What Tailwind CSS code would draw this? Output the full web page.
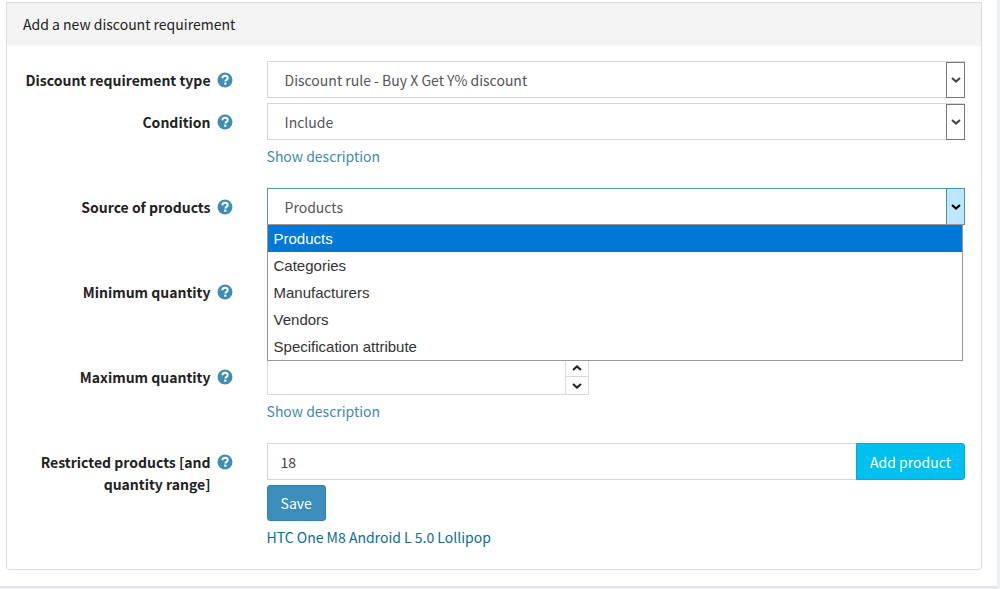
<!DOCTYPE html>
<html lang="en">
<head>
  <meta charset="UTF-8" />
  <meta name="viewport" content="width=device-width, initial-scale=1.0"/>
  <title>Add a new discount requirement</title>
  <script src="https://cdn.jsdelivr.net/npm/@tailwindcss/browser@4"></script>
</head>
<body class="bg-[#eff2f4] font-['Noto_Sans_CJK_SC',sans-serif] text-[14px] leading-[22px] text-[#222]">

  <!-- icons, reused below -->
  <svg class="hidden">
    <symbol id="help" viewBox="0 0 16 16">
      <circle cx="8" cy="8" r="7.5" fill="#3f8db5"/>
      <path d="M5.4 6.2C5.4 4.5 6.5 3.7 8 3.7c1.6 0 2.7.9 2.7 2.3 0 1.8-2.3 1.9-2.3 3.4" fill="none" stroke="#fff" stroke-width="2"/>
      <rect x="7.2" y="10.6" width="2.2" height="2.1" fill="#fff"/>
    </symbol>
    <symbol id="down" viewBox="0 0 10 6">
      <path d="M1 1l4 3.6L9 1" fill="none" stroke="currentColor" stroke-width="2"/>
    </symbol>
    <symbol id="up" viewBox="0 0 10 6">
      <path d="M1 5l4-3.6L9 5" fill="none" stroke="currentColor" stroke-width="2"/>
    </symbol>
  </svg>

  <div class="mr-[3px] border-b-2 border-[#e4e5e7] bg-white pt-[2px] pr-[15px] pb-4 pl-[6px]">
    <div class="overflow-hidden rounded-b border border-[#dddddd]">
      <h1 class="bg-[#f4f4f4] px-4 pt-[10px] pb-[11px]">Add a new discount requirement</h1>

      <form class="pt-[15px] pr-4 pb-[21px] pl-4">

        <div class="mb-[5px] grid grid-cols-[3fr_10fr] gap-x-[34px]">
          <div class="flex justify-end gap-[6px] pt-2">
            <label for="type" class="text-right font-bold">Discount requirement type</label>
            <svg class="mt-[3px] size-4 shrink-0"><use href="#help"/></svg>
          </div>
          <div class="relative">
            <select id="type" class="h-[37px] w-full appearance-none border border-[#d6d6d6] bg-white px-[17px] text-[#555]">
              <option>Discount rule - Buy X Get Y% discount</option>
            </select>
            <span class="pointer-events-none absolute top-px right-0 bottom-0 flex w-[19px] items-center justify-center border border-[#777] bg-white text-[#444]">
              <svg class="h-[6px] w-[10px]"><use href="#down"/></svg>
            </span>
          </div>
        </div>

        <div class="mb-[21px] grid grid-cols-[3fr_10fr] gap-x-[34px]">
          <div class="flex justify-end gap-[6px] pt-2">
            <label for="condition" class="text-right font-bold">Condition</label>
            <svg class="mt-[3px] size-4 shrink-0"><use href="#help"/></svg>
          </div>
          <div>
            <div class="relative">
              <select id="condition" class="h-[37px] w-full appearance-none border border-[#d6d6d6] bg-white px-[17px] text-[#555]">
                <option>Include</option>
              </select>
              <span class="pointer-events-none absolute top-px right-0 bottom-0 flex w-[19px] items-center justify-center border border-[#777] bg-white text-[#444]">
                <svg class="h-[6px] w-[10px]"><use href="#down"/></svg>
              </span>
            </div>
            <a href="#" class="mt-[5px] block text-[#438ba5]">Show description</a>
          </div>
        </div>

        <div class="mb-[48px] grid grid-cols-[3fr_10fr] gap-x-[34px]">
          <div class="flex justify-end gap-[6px] pt-2">
            <label for="source" class="text-right font-bold">Source of products</label>
            <svg class="mt-[3px] size-4 shrink-0"><use href="#help"/></svg>
          </div>
          <div class="relative">
            <select id="source" class="h-[37px] w-full appearance-none border border-[#5c97a8] bg-white px-[17px] text-[#555]">
              <option>Products</option>
            </select>
            <span class="pointer-events-none absolute top-0 right-0 bottom-0 flex w-[19px] items-center justify-center border border-[#4295a8] bg-[#bee6fd] text-black">
              <svg class="h-[6px] w-[10px]"><use href="#down"/></svg>
            </span>
            <!-- open list -->
            <ul class="absolute top-9 right-[2px] left-0 z-10 border border-[#999] bg-white font-['Liberation_Sans',Arial,sans-serif] text-[15px] leading-[27px] text-[#333]">
              <li class="bg-[#0078d7] px-[6px] text-white">Products</li>
              <li class="px-[6px]">Categories</li>
              <li class="px-[6px]">Manufacturers</li>
              <li class="px-[6px]">Vendors</li>
              <li class="px-[6px]">Specification attribute</li>
            </ul>
          </div>
        </div>

        <div class="mb-[48px] grid grid-cols-[3fr_10fr] gap-x-[34px]">
          <div class="flex justify-end gap-[6px] pt-2">
            <label for="min" class="text-right font-bold">Minimum quantity</label>
            <svg class="mt-[3px] size-4 shrink-0"><use href="#help"/></svg>
          </div>
          <div class="flex h-[37px] w-[322px] border border-[#d9d9d9]">
            <input type="text" id="min" class="min-w-0 flex-1 px-3" />
            <div class="flex w-[23px] flex-col border-l border-[#d9d9d9]">
              <button type="button" aria-label="Increase minimum" class="flex flex-1 items-center justify-center border-b border-[#d9d9d9]"><svg class="h-[6px] w-[10px]"><use href="#up"/></svg></button>
              <button type="button" aria-label="Decrease minimum" class="flex flex-1 items-center justify-center"><svg class="h-[6px] w-[10px]"><use href="#down"/></svg></button>
            </div>
          </div>
        </div>

        <div class="mb-[21px] grid grid-cols-[3fr_10fr] gap-x-[34px]">
          <div class="flex justify-end gap-[6px] pt-2">
            <label for="max" class="text-right font-bold">Maximum quantity</label>
            <svg class="mt-[3px] size-4 shrink-0"><use href="#help"/></svg>
          </div>
          <div>
            <div class="flex h-[37px] w-[322px] border border-[#d9d9d9]">
              <input type="text" id="max" class="min-w-0 flex-1 px-3" />
              <div class="flex w-[23px] flex-col border-l border-[#d9d9d9]">
                <button type="button" aria-label="Increase maximum" class="flex flex-1 items-center justify-center border-b border-[#d9d9d9]"><svg class="h-[6px] w-[10px]"><use href="#up"/></svg></button>
                <button type="button" aria-label="Decrease maximum" class="flex flex-1 items-center justify-center"><svg class="h-[6px] w-[10px]"><use href="#down"/></svg></button>
              </div>
            </div>
            <a href="#" class="mt-[5px] block text-[#438ba5]">Show description</a>
          </div>
        </div>

        <div class="grid grid-cols-[3fr_10fr] gap-x-[34px]">
          <div class="flex justify-end gap-[6px] pt-2">
            <label for="restricted" class="text-right font-bold">Restricted products [and quantity range]</label>
            <svg class="mt-[3px] size-4 shrink-0"><use href="#help"/></svg>
          </div>
          <div>
            <div class="flex h-[37px]">
              <input type="text" id="restricted" value="18" class="min-w-0 flex-1 border border-r-0 border-[#d6d6d6] px-[13px] text-[#444]" />
              <button type="button" class="rounded-r-[3px] border border-[#00acd6] bg-[#00c0ef] px-[13px] text-white">Add product</button>
            </div>
            <button type="submit" class="mt-[5px] block h-9 rounded-[3px] border border-[#367fa9] bg-[#3c8dbc] px-[13px] text-white">Save</button>
            <a href="#" class="mt-[5px] block text-[#0b6e8f]">HTC One M8 Android L 5.0 Lollipop</a>
          </div>
        </div>

      </form>
    </div>
  </div>

</body>
</html>
